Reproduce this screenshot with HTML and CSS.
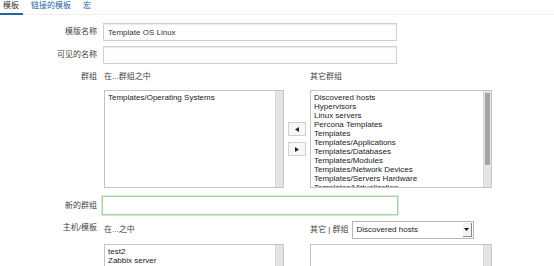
FILE: index.html
```html
<!DOCTYPE html>
<html lang="zh-CN">
<head>
    <meta charset="UTF-8">
    <title>模板</title>
    <link rel="stylesheet" href="styles.css">
</head>
<body>
    <nav class="tabs">
        <span class="tab active">模板</span>
        <span class="tab">链接的模板</span>
        <span class="tab">宏</span>
    </nav>

    <form class="form">
        <div class="row first">
            <label class="lbl">模版名称</label>
            <input class="text" type="text" value="Template OS Linux">
        </div>
        <div class="row gap-s">
            <label class="lbl">可见的名称</label>
            <input class="text" type="text" value="">
        </div>

        <!-- host groups -->
        <div class="row top gap-l">
            <label class="lbl head-lbl">群组</label>
            <div class="twin">
                <div class="twin-head">在...群组之中</div>
                <div></div>
                <div class="twin-head">其它群组</div>

                <div class="list tall">
                    <ul class="items">
                        <li>Templates/Operating Systems</li>
                    </ul>
                    <div class="scroll"></div>
                </div>
                <div class="moves">
                    <button type="button" class="move">
                        <svg width="4" height="5" viewBox="0 0 4 5"><polygon points="4,0 0,2.5 4,5" fill="#222"/></svg>
                    </button>
                    <button type="button" class="move">
                        <svg width="4" height="5" viewBox="0 0 4 5"><polygon points="0,0 4,2.5 0,5" fill="#222"/></svg>
                    </button>
                </div>
                <div class="list tall">
                    <ul class="items">
                        <li>Discovered hosts</li>
                        <li>Hypervisors</li>
                        <li>Linux servers</li>
                        <li>Percona Templates</li>
                        <li>Templates</li>
                        <li>Templates/Applications</li>
                        <li>Templates/Databases</li>
                        <li>Templates/Modules</li>
                        <li>Templates/Network Devices</li>
                        <li>Templates/Servers Hardware</li>
                        <li>Templates/Virtualization</li>
                    </ul>
                    <div class="scroll"><div class="thumb"></div></div>
                </div>
            </div>
        </div>

        <div class="row gap-l">
            <label class="lbl">新的群组</label>
            <input class="text focus" type="text" value="">
        </div>

        <!-- hosts / templates -->
        <div class="row top gap-m">
            <label class="lbl host-lbl">主机/模板</label>
            <div class="twin">
                <div class="twin-head tall-head">在...之中</div>
                <div></div>
                <div class="twin-head tall-head">
                    其它 | 群组
                    <span class="select">
                        <span class="select-val">Discovered hosts</span>
                        <span class="select-btn">
                            <svg width="5" height="3" viewBox="0 0 5 3"><polygon points="0,0 5,0 2.5,3" fill="#111"/></svg>
                        </span>
                    </span>
                </div>

                <div class="list short">
                    <ul class="items">
                        <li>test2</li>
                        <li>Zabbix server</li>
                    </ul>
                    <div class="scroll"></div>
                </div>
                <div></div>
                <div class="list short">
                    <ul class="items"></ul>
                    <div class="scroll"></div>
                </div>
            </div>
        </div>
    </form>
</body>
</html>
```

FILE: styles.css
```css
* {
    box-sizing: border-box;
}
body {
    margin: 0;
    font-family: "Liberation Sans", "Noto Sans CJK SC", sans-serif;
    font-size: 8px;
    color: #333;
    background: #fff;
    overflow: hidden;
}

/* tabs */
.tabs {
    display: flex;
    gap: 5px;
    height: 15px;
    border-bottom: 1px solid #efefef;
}
.tab {
    padding: 1px 4px 0 3px;
    line-height: 10px;
    color: #1f65a6;
}
.tab.active {
    color: #333;
    height: 15px;
    border-bottom: 2px solid #1f65a6;
}

/* form rows */
.form {
    display: flex;
    flex-direction: column;
    padding-top: 8px;
}
.row {
    display: grid;
    grid-template-columns: 97px auto;
    column-gap: 6px;
    align-items: center;
}
.row.top {
    align-items: start;
}
.gap-s {
    margin-top: 5px;
}
.gap-m {
    margin-top: 6px;
}
.gap-l {
    margin-top: 8px;
}
.lbl {
    text-align: right;
    color: #444;
    line-height: 10px;
}
.host-lbl {
    margin-top: 2px;
}
.text {
    width: 294px;
    height: 18px;
    margin: 0;
    padding: 0 4px;
    font: inherit;
    color: #333;
    border: 1px solid #cfcfcf;
    box-shadow: inset 0 1px 1px #ececec;
    outline: none;
}
.text.focus {
    margin-left: -1px;
    width: 296px;
    height: 19px;
    border-color: #a7d3a7;
    box-shadow: 0 0 0 1px #d4ead4;
}

/* twin list boxes */
.twin {
    display: grid;
    grid-template-columns: 180px 18px 182px;
    column-gap: 4px;
    row-gap: 8px;
    margin-left: 1px;
}
.twin-head {
    line-height: 10px;
    color: #444;
}
.twin-head.tall-head {
    height: 18px;
    display: flex;
    align-items: center;
    gap: 3px;
    margin-bottom: -3px;
}
.list {
    display: flex;
    border: 1px solid #c4c4c4;
    background: #fff;
}
.list.tall {
    height: 98px;
}
.list.short {
    height: 40px;
}
.items {
    flex: 1;
    margin: 0;
    padding: 2px 3px;
    list-style: none;
    line-height: 9px;
    overflow: hidden;
    color: #222;
}
.scroll {
    width: 8px;
    background: #e4e4e4;
    border-left: 1px solid #d6d6d6;
    padding: 2px 1px;
}
.thumb {
    height: 72px;
    background: #a5a5a5;
}

.moves {
    display: flex;
    flex-direction: column;
    justify-content: center;
    gap: 6px;
}
.move {
    width: 18px;
    height: 14px;
    padding: 0;
    display: flex;
    align-items: center;
    justify-content: center;
    background: #f7f7f7;
    border: 1px solid #d0d0d0;
}

/* select */
.select {
    display: flex;
    align-items: center;
    width: 122px;
    height: 18px;
    border: 1px solid #b5b5b5;
    background: #fff;
    padding-left: 4px;
}
.select-val {
    flex: 1;
    color: #222;
}
.select-btn {
    width: 9px;
    height: 14px;
    margin-right: 1px;
    display: flex;
    align-items: center;
    justify-content: center;
    background: #f2f2f2;
    border-right: 1px solid #888;
    border-bottom: 1px solid #888;
}
```
